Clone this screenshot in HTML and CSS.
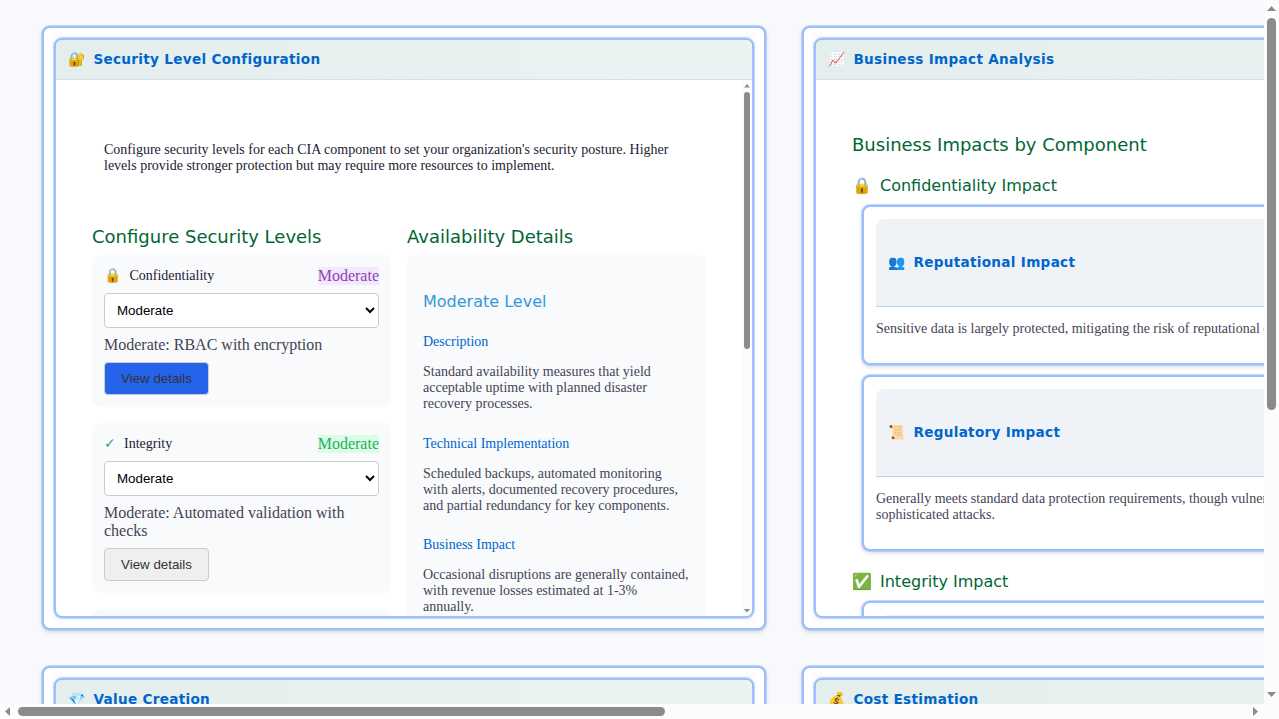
FILE: index.html
```html
<!DOCTYPE html>
<html lang="en">
<head>
<meta charset="utf-8">
<title>Security Dashboard</title>
<link rel="stylesheet" href="styles.css">
</head>
<body>
<div class="window">
  <main class="viewport">
    <div class="dashboard">
      <section class="frame">
        <div class="widget">
          <header class="widget-header"><span class="widget-icon">🔐</span><h2 class="widget-title">Security Level Configuration</h2></header>
          <div class="widget-body">
            <div class="config">
              <p class="intro">Configure security levels for each CIA component to set your organization's security posture. Higher levels provide stronger protection but may require more resources to implement.</p>
              <div class="columns">
                <div class="column">
                  <h3 class="heading">Configure Security Levels</h3>
                  <div class="level-list">
                    <div class="level-card">
                      <div class="level-row"><span class="level-name"><span class="level-icon">🔒</span>Confidentiality</span><span class="badge badge-purple">Moderate</span></div>
                      <select class="level-select"><option>Moderate</option></select>
                      <p class="level-desc">Moderate: RBAC with encryption</p>
                      <button class="details-button active">View details</button>
                    </div>
                    <div class="level-card">
                      <div class="level-row"><span class="level-name"><span class="level-icon check">✓</span>Integrity</span><span class="badge badge-green">Moderate</span></div>
                      <select class="level-select"><option>Moderate</option></select>
                      <p class="level-desc">Moderate: Automated validation with checks</p>
                      <button class="details-button">View details</button>
                    </div>
                    <div class="level-card placeholder"></div>
                  </div>
                </div>
                <div class="column">
                  <h3 class="heading">Availability Details</h3>
                  <div class="details">
                    <h4 class="details-level">Moderate Level</h4>
                    <h5 class="details-title">Description</h5>
                    <p class="details-text">Standard availability measures that yield acceptable uptime with planned disaster recovery processes.</p>
                    <h5 class="details-title">Technical Implementation</h5>
                    <p class="details-text tight">Scheduled backups, automated monitoring with alerts, documented recovery procedures, and partial redundancy for key components.</p>
                    <h5 class="details-title">Business Impact</h5>
                    <p class="details-text">Occasional disruptions are generally contained, with revenue losses estimated at 1-3% annually.</p>
                  </div>
                </div>
              </div>
            </div>
            <div class="inner-scroll">
              <svg width="10" height="12" viewBox="0 0 10 12"><path d="M2 7.500 5 4l3 3.500z"/></svg>
              <span class="inner-thumb"></span>
              <svg width="10" height="12" viewBox="0 0 10 12"><path d="M2 5h6L5 8.500z"/></svg>
            </div>
          </div>
        </div>
      </section>

      <section class="frame">
        <div class="widget">
          <header class="widget-header"><span class="widget-icon">📈</span><h2 class="widget-title">Business Impact Analysis</h2></header>
          <div class="widget-body">
            <div class="impacts">
              <h3 class="heading">Business Impacts by Component</h3>
              <h4 class="subheading"><span class="sub-icon">🔒</span>Confidentiality Impact</h4>
              <div class="impact-list">
                <article class="impact-card">
                  <div class="impact-header"><span class="widget-icon">👥</span><h5 class="widget-title">Reputational Impact</h5></div>
                  <p class="impact-text">Sensitive data is largely protected, mitigating the risk of reputational damage.</p>
                </article>
                <article class="impact-card">
                  <div class="impact-header"><span class="widget-icon">📜</span><h5 class="widget-title">Regulatory Impact</h5></div>
                  <p class="impact-text">Generally meets standard data protection requirements, though vulnerabilities may remain against sophisticated attacks.</p>
                </article>
              </div>
              <h4 class="subheading"><span class="sub-icon">✅</span>Integrity Impact</h4>
              <div class="impact-list">
                <article class="impact-card"><div class="impact-header inset"></div></article>
              </div>
            </div>
          </div>
        </div>
      </section>

      <section class="frame">
        <div class="widget">
          <header class="widget-header"><span class="widget-icon">💎</span><h2 class="widget-title">Value Creation</h2></header>
        </div>
      </section>
      <section class="frame">
        <div class="widget">
          <header class="widget-header"><span class="widget-icon">💰</span><h2 class="widget-title">Cost Estimation</h2></header>
        </div>
      </section>
    </div>
  </main>
  <div class="scroll-y">
    <svg width="15" height="18" viewBox="0 0 15 18"><path d="M3 11 7.500 6l4.500 5z"/></svg>
    <span class="thumb-y"></span>
    <svg width="15" height="18" viewBox="0 0 15 18"><path d="M3 6h9l-4.500 5z"/></svg>
  </div>
  <div class="scroll-x">
    <svg width="18" height="15" viewBox="0 0 18 15"><path d="M10 3v9L5 7.500z"/></svg>
    <span class="thumb-x"></span>
    <svg width="18" height="15" viewBox="0 0 18 15"><path d="M7 3v9l5-4.500z"/></svg>
  </div>
</div>
</body>
</html>
```
FILE: styles.css
```css
* { box-sizing: border-box; }
html, body { margin: 0; height: 100%; overflow: hidden; }
body { font-family: "Liberation Serif", serif; font-size: 16px; color: #222233; background: #fcfcfc; }
h2, h3, h4, h5, p { margin: 0; font-weight: normal; }

.window {
  display: grid;
  grid-template: 704px 15px / 1264px 15px;
  width: 1279px;
  height: 719px;
}
.viewport { overflow: hidden; background: #f8f9fd; }
.dashboard {
  display: grid;
  grid-template-columns: 724px 724px;
  grid-auto-rows: 604px;
  gap: 36px;
  width: 1568px;
  padding: 26px 42px;
}

.frame, .widget, .impact-card {
  border: 2px solid #9dbffb;
  border-radius: 8px;
  background: #fff;
  box-shadow: 0 0 0 1px rgba(157, 191, 251, .6), 0 2px 4px rgba(0, 0, 0, .15);
}
.frame { padding: 10px; }
.widget { height: 580px; overflow: hidden; display: flex; flex-direction: column; box-shadow: 0 0 0 1px rgba(157, 191, 251, .6), 0 0 8px rgba(0, 0, 0, .06); }
.widget-header {
  display: flex;
  align-items: center;
  flex: none;
  height: 40px;
  padding: 0 12px 2px;
  background: linear-gradient(90deg, #e4eeec, #ebf4f3);
  border-bottom: 1px solid #d5e0e8;
}
.widget-icon { width: 25.4px; font: 14px "DejaVu Sans", sans-serif; }
.widget-title { font: bold 13.6px "DejaVu Sans", sans-serif; color: #0066cc; letter-spacing: .3px; }
.widget-body { flex: 1; min-height: 0; overflow: hidden; display: flex; justify-content: space-between; }

.config { width: 650px; padding: 62px 0 0 36px; }
.intro { font-size: 14px; line-height: 16px; padding: 0 12px; width: 614px; }
.columns { display: grid; grid-template-columns: 299px 299px; gap: 16px; margin-top: 52px; }
.heading { font: 18px/21px "DejaVu Sans", sans-serif; color: #006633; }
.level-list, .details { margin-top: 8px; }
.level-list { display: grid; gap: 16px; }
.level-card { padding: 12px; border-radius: 8px; background: #f9fafc; }
.level-row { display: flex; justify-content: space-between; align-items: center; height: 18px; }
.level-name { display: flex; align-items: center; font-size: 14px; line-height: 16px; }
.level-icon { margin-right: 8.4px; }
.check { margin-right: 8px; color: #27ae60; }
.badge { line-height: 18px; }
.badge-purple { color: #8e44ad; background: #f3e8ff; }
.badge-green { color: #27ae60; background: #dcfce7; }
.level-select {
  display: block;
  width: 100%;
  height: 35px;
  margin: 8px 0;
  padding: 8px;
  border: 1px solid #ccc;
  border-radius: 4px;
  background: #fff;
  font: 13.333px "Liberation Sans", sans-serif;
  color: #000;
}
.level-desc { line-height: 18px; color: #444455; }
.details-button {
  display: block;
  width: 105px;
  height: 33px;
  margin-top: 8px;
  padding: 0;
  border: 1px solid #ccc;
  border-radius: 4px;
  background: #efefef;
  color: #333;
  font: 13.333px "Liberation Sans", sans-serif;
}
.details-button.active { background: #2563eb; }
.placeholder { height: 150px; }

.details { height: 600px; padding: 37px 16px 0; border-radius: 8px; background: #f9fafc; }
.details-level { font: 16px/19px "DejaVu Sans", sans-serif; color: #3498db; margin-bottom: 23px; }
.details-title { font-size: 14px; line-height: 16px; color: #0066cc; }
.details-text { margin: 14px 0 24px; font-size: 14px; line-height: 16px; color: #444455; }
.details-text.tight { margin-bottom: 23px; }

.inner-scroll { width: 10px; height: 536px; display: flex; flex-direction: column; align-items: center; background: #fcfcfc; }
.inner-scroll svg:last-child, .scroll-y svg:last-child { margin-top: auto; }
.inner-thumb { width: 6px; height: 257px; border-radius: 3px; background: #8b8b8b; }
svg { display: block; flex: none; fill: #8b8b8b; }

.impacts { width: 100%; padding: 54px 36px 0; }
.subheading { display: flex; align-items: center; height: 20px; margin-top: 20px; font: 16px "DejaVu Sans", sans-serif; color: #006633; }
.sub-icon { width: 28px; }
.impact-list { display: grid; gap: 10px; padding: 10px 10px 0; }
.impact-card { padding: 12px; }
.impact-header {
  display: flex;
  align-items: center;
  height: 88px;
  padding: 0 12px 2px;
  background: #eff3f8;
  border-bottom: 1px solid #b9d4ee;
  border-radius: 8px 8px 0 0;
}
.inset { margin-left: 4px; }
.impact-text { margin: 14px 0; font-size: 14px; line-height: 16px; color: #444455; }

.scroll-y { display: flex; flex-direction: column; }
.thumb-y { width: 9px; height: 392px; margin-left: 3px; border-radius: 5px; background: #8b8b8b; }
.scroll-x { display: flex; align-items: center; }
.scroll-x svg:last-child { margin-left: auto; }
.thumb-x { width: 647px; height: 9px; border-radius: 5px; background: #8b8b8b; }
```
